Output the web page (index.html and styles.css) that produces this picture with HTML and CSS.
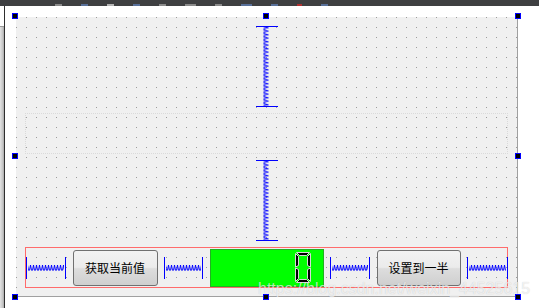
FILE: index.html
```html
<!DOCTYPE html>
<html lang="zh-CN">
<head>
  <meta charset="UTF-8" />
  <meta name="viewport" content="width=device-width, initial-scale=1" />
  <title>Form Designer</title>
  <link rel="stylesheet" href="styles.css">
</head>
<body>
  <div class="topbar">
    <span class="tb-bit"></span>
    <span class="tb-bit blue"></span>
    <span class="tb-bit light"></span>
    <span class="tb-bit blue"></span>
    <span class="tb-bit"></span>
    <span class="tb-bit wide"></span>
    <span class="tb-bit"></span>
    <span class="tb-bit blue wide"></span>
    <span class="tb-bit blue"></span>
    <span class="tb-bit red"></span>
    <span class="tb-bit blue"></span>
  </div>

  <div class="workspace">
    <div class="sidebar"><div class="sidebar-top"></div></div>

    <div class="canvas">
      <div class="form">
        <span class="handle h-tl"></span>
        <span class="handle h-tc"></span>
        <span class="handle h-tr"></span>
        <span class="handle h-ml"></span>
        <span class="handle h-mr"></span>
        <span class="handle h-bl"></span>
        <span class="handle h-bc"></span>
        <span class="handle h-br"></span>

        <div class="vbox">
          <div class="vspacer">
            <svg width="22" height="81" viewBox="0 0 22 81">
              <defs>
                <pattern id="vs1" patternUnits="userSpaceOnUse" width="22" height="3.5">
                  <path d="M7.5 0.5 L12.5 1.75 L7.5 3" fill="none" stroke="#0000ff" stroke-width="1" />
                </pattern>
              </defs>
              <line x1="0" y1="0.5" x2="22" y2="0.5" stroke="#0000ff" />
              <line x1="0" y1="80.5" x2="22" y2="80.5" stroke="#0000ff" />
              <rect x="6" y="1" width="8" height="79" fill="url(#vs1)" />
            </svg>
          </div>

          <div class="empty-layout"></div>

          <div class="vspacer">
            <svg width="22" height="81" viewBox="0 0 22 81">
              <defs>
                <pattern id="vs2" patternUnits="userSpaceOnUse" width="22" height="3.5">
                  <path d="M7.5 0.5 L12.5 1.75 L7.5 3" fill="none" stroke="#0000ff" stroke-width="1" />
                </pattern>
              </defs>
              <line x1="0" y1="0.5" x2="22" y2="0.5" stroke="#0000ff" />
              <line x1="0" y1="80.5" x2="22" y2="80.5" stroke="#0000ff" />
              <rect x="6" y="1" width="8" height="79" fill="url(#vs2)" />
            </svg>
          </div>

          <div class="hbox">
            <div class="hspacer s40">
              <svg width="40" height="22" viewBox="0 0 40 22">
                <defs>
                  <pattern id="hs1" patternUnits="userSpaceOnUse" width="3" height="22">
                    <path d="M0.5 13.5 L1.5 8 L2.5 13.5" fill="none" stroke="#0000ff" stroke-width="1" />
                  </pattern>
                </defs>
                <line x1="0.5" y1="0" x2="0.5" y2="22" stroke="#0000ff" />
                <line x1="39.5" y1="0" x2="39.5" y2="22" stroke="#0000ff" />
                <rect x="2" y="7" width="36" height="8" fill="url(#hs1)" />
              </svg>
            </div>

            <button class="btn b85" type="button">获取当前值</button>

            <div class="hspacer s39">
              <svg width="39" height="22" viewBox="0 0 39 22">
                <defs>
                  <pattern id="hs2" patternUnits="userSpaceOnUse" width="3" height="22">
                    <path d="M0.5 13.5 L1.5 8 L2.5 13.5" fill="none" stroke="#0000ff" stroke-width="1" />
                  </pattern>
                </defs>
                <line x1="0.5" y1="0" x2="0.5" y2="22" stroke="#0000ff" />
                <line x1="38.5" y1="0" x2="38.5" y2="22" stroke="#0000ff" />
                <rect x="2" y="7" width="35" height="8" fill="url(#hs2)" />
              </svg>
            </div>

            <div class="lcd">
              <svg class="digit" width="16" height="31" viewBox="0 0 16 31">
                <g fill="#000" stroke="#d8d8d8" stroke-width="1" stroke-linejoin="round">
                  <polygon points="1.5,0.5 14.5,0.5 11.5,3.5 4.5,3.5" />
                  <polygon points="1.5,30.5 14.5,30.5 11.5,27.5 4.5,27.5" />
                  <polygon points="0.5,1.5 3.5,4.5 3.5,13.5 0.5,15" />
                  <polygon points="0.5,16 3.5,17.5 3.5,26.5 0.5,29.5" />
                  <polygon points="15.5,1.5 12.5,4.5 12.5,13.5 15.5,15" />
                  <polygon points="15.5,16 12.5,17.5 12.5,26.5 15.5,29.5" />
                </g>
              </svg>
            </div>

            <div class="hspacer s40">
              <svg width="40" height="22" viewBox="0 0 40 22">
                <defs>
                  <pattern id="hs3" patternUnits="userSpaceOnUse" width="3" height="22">
                    <path d="M0.5 13.5 L1.5 8 L2.5 13.5" fill="none" stroke="#0000ff" stroke-width="1" />
                  </pattern>
                </defs>
                <line x1="0.5" y1="0" x2="0.5" y2="22" stroke="#0000ff" />
                <line x1="39.5" y1="0" x2="39.5" y2="22" stroke="#0000ff" />
                <rect x="2" y="7" width="36" height="8" fill="url(#hs3)" />
              </svg>
            </div>

            <button class="btn b84" type="button">设置到一半</button>

            <div class="hspacer s41 last">
              <svg width="41" height="22" viewBox="0 0 41 22">
                <defs>
                  <pattern id="hs4" patternUnits="userSpaceOnUse" width="3" height="22">
                    <path d="M0.5 13.5 L1.5 8 L2.5 13.5" fill="none" stroke="#0000ff" stroke-width="1" />
                  </pattern>
                </defs>
                <line x1="0.5" y1="0" x2="0.5" y2="22" stroke="#0000ff" />
                <line x1="40.5" y1="0" x2="40.5" y2="22" stroke="#0000ff" />
                <rect x="2" y="7" width="37" height="8" fill="url(#hs4)" />
              </svg>
            </div>
          </div>
        </div>
      </div>
    </div>
  </div>

  <div class="watermark">https://blog.csdn.net/weixin_44525615</div>
</body>
</html>
```

FILE: styles.css
```css
html, body {
  margin: 0;
  padding: 0;
  background: #ffffff;
  overflow: hidden;
}

body {
  width: 539px;
  height: 308px;
  position: relative;
  font-family: "Noto Sans CJK SC", "Liberation Sans", sans-serif;
}

.topbar {
  height: 6px;
  background: #3e3f41;
  display: flex;
  align-items: flex-end;
  gap: 19px;
  padding-left: 55px;
}

.tb-bit {
  width: 7px;
  height: 2px;
  background: #8a8a8a;
}

.tb-bit.blue { background: #58709a; }
.tb-bit.light { background: #b4b4b4; }
.tb-bit.red { background: #b03030; width: 5px; }
.tb-bit.wide { width: 11px; }

.workspace {
  display: flex;
  height: 302px;
}

.sidebar {
  width: 4px;
  border-right: 1px solid #2e2e2e;
  background: linear-gradient(to right, #e4e4e4, #c4c4c4 70%, #a8a8a8);
}

.sidebar-top {
  height: 20px;
  background: #ffffff;
  border-bottom: 1px solid #9a9a9a;
}

.canvas {
  flex: 1;
  padding: 11px 0 0 11px;
}

.form {
  position: relative;
  box-sizing: border-box;
  width: 502px;
  height: 280px;
  padding: 9px 9px 8px 9px;
  background-color: #f0f0f0;
  background-image: conic-gradient(from 270deg at 1px 1px, #9c9c9c 90deg, transparent 0);
  background-size: 10px 10px;
  border-right: 1px solid #a0a0a0;
  border-bottom: 1px solid #a0a0a0;
}

.handle {
  position: absolute;
  box-sizing: border-box;
  width: 6px;
  height: 6px;
  background: #000000;
  border: 1px solid #0000ff;
  z-index: 2;
}

.h-tl { left: -4px; top: -4px; }
.h-tc { left: 247px; top: -4px; }
.h-tr { left: 499px; top: -4px; }
.h-ml { left: -4px; top: 136px; }
.h-mr { left: 499px; top: 136px; }
.h-bl { left: -4px; top: 277px; }
.h-bc { left: 247px; top: 277px; }
.h-br { left: 499px; top: 277px; }

.vbox {
  display: flex;
  flex-direction: column;
  gap: 6px;
}

.vspacer {
  height: 81px;
  display: flex;
  justify-content: center;
}

.vspacer svg,
.hspacer svg,
.digit {
  display: block;
}

.empty-layout {
  box-sizing: border-box;
  height: 41px;
  border: 1px dotted #dadada;
}

.hbox {
  box-sizing: border-box;
  height: 41px;
  border: 1px solid #ff6b6b;
  display: flex;
  align-items: center;
  justify-content: space-between;
}

.hspacer {
  height: 22px;
}

.hspacer.last {
  margin-right: -1px;
}

.s39 { width: 39px; }
.s40 { width: 40px; }
.s41 { width: 41px; }

.btn {
  box-sizing: border-box;
  height: 36px;
  padding: 0;
  border: 1px solid #707070;
  border-radius: 3px;
  background: linear-gradient(to bottom, #f2f2f2 0%, #ebebeb 48%, #dddddd 52%, #cfcfcf 100%);
  font-family: "Noto Sans CJK SC", sans-serif;
  font-size: 12px;
  color: #000000;
  cursor: pointer;
}

.b84 { width: 84px; }
.b85 { width: 85px; }

.lcd {
  box-sizing: border-box;
  width: 114px;
  height: 38px;
  background: #00ff00;
  border: 1px solid #22b022;
  display: flex;
  align-items: center;
  justify-content: flex-end;
  padding-right: 12px;
}

.watermark {
  position: absolute;
  left: 258px;
  top: 281px;
  font-family: "Liberation Sans", Arial, sans-serif;
  font-size: 16px;
  line-height: 16px;
  color: rgba(255, 255, 255, 0.7);
  text-shadow: 0 0 1px rgba(0, 0, 0, 0.2);
  white-space: nowrap;
  pointer-events: none;
}
```
